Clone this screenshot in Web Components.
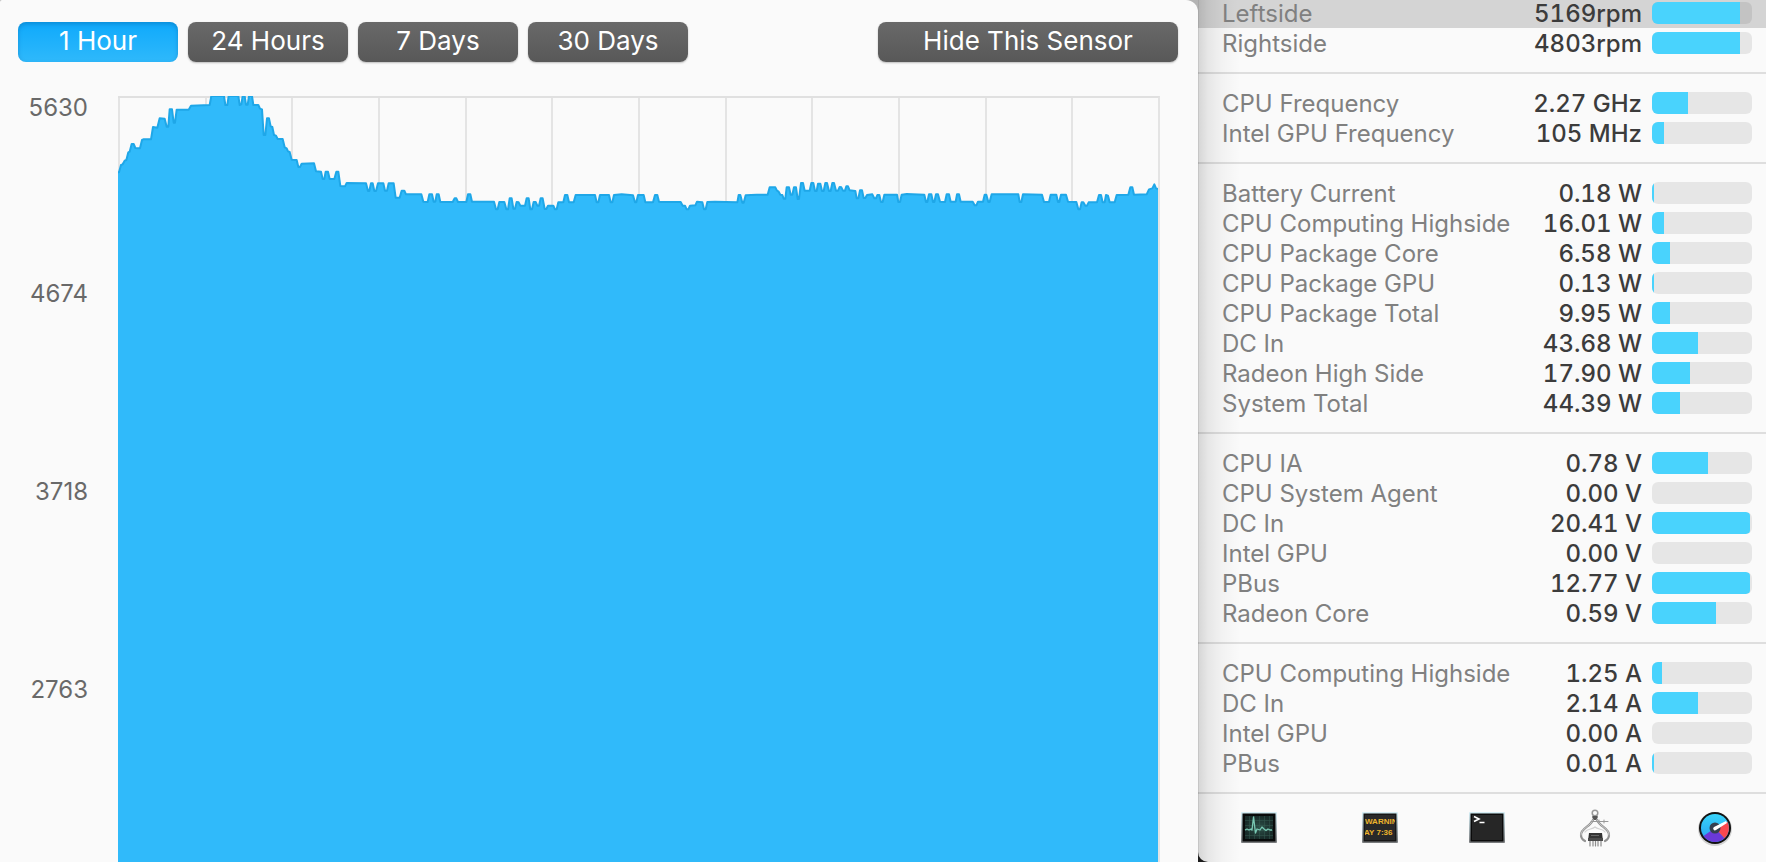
<!DOCTYPE html>
<html lang="en">
<head>
<meta charset="utf-8">
<title>Sensors</title>
<style>
    body {
        margin: 0;
        min-height: 100vh;
        display: grid;
        background: linear-gradient(#b4b4b4 50%, #1c1c1c 50%);
        font-family: Inter, "Liberation Sans", sans-serif;
        font-size: 24px;
        line-height: 30px;
        color: #3c3c3c;
    }
</style>
</head>
<body>
<sensor-app>
    <history-panel slot="history">
        <range-button slot="ranges" active>1 Hour</range-button>
        <range-button slot="ranges">24 Hours</range-button>
        <range-button slot="ranges">7 Days</range-button>
        <range-button slot="ranges">30 Days</range-button>
        <range-button slot="action" wide>Hide This Sensor</range-button>
        <history-chart labels="5630,4674,3718,2763"></history-chart>
    </history-panel>
    <sensor-list slot="sensors">
        <sensor-group>
            <sensor-row label="Leftside" value="5169rpm" level="88" selected></sensor-row>
            <sensor-row label="Rightside" value="4803rpm" level="88"></sensor-row>
        </sensor-group>
        <sensor-group>
            <sensor-row label="CPU Frequency" value="2.27 GHz" level="36"></sensor-row>
            <sensor-row label="Intel GPU Frequency" value="105 MHz" level="12"></sensor-row>
        </sensor-group>
        <sensor-group>
            <sensor-row label="Battery Current" value="0.18 W" level="2"></sensor-row>
            <sensor-row label="CPU Computing Highside" value="16.01 W" level="12"></sensor-row>
            <sensor-row label="CPU Package Core" value="6.58 W" level="18"></sensor-row>
            <sensor-row label="CPU Package GPU" value="0.13 W" level="2"></sensor-row>
            <sensor-row label="CPU Package Total" value="9.95 W" level="18"></sensor-row>
            <sensor-row label="DC In" value="43.68 W" level="46"></sensor-row>
            <sensor-row label="Radeon High Side" value="17.90 W" level="38"></sensor-row>
            <sensor-row label="System Total" value="44.39 W" level="28"></sensor-row>
        </sensor-group>
        <sensor-group>
            <sensor-row label="CPU IA" value="0.78 V" level="56"></sensor-row>
            <sensor-row label="CPU System Agent" value="0.00 V" level="0"></sensor-row>
            <sensor-row label="DC In" value="20.41 V" level="98"></sensor-row>
            <sensor-row label="Intel GPU" value="0.00 V" level="0"></sensor-row>
            <sensor-row label="PBus" value="12.77 V" level="98"></sensor-row>
            <sensor-row label="Radeon Core" value="0.59 V" level="64"></sensor-row>
        </sensor-group>
        <sensor-group>
            <sensor-row label="CPU Computing Highside" value="1.25 A" level="10"></sensor-row>
            <sensor-row label="DC In" value="2.14 A" level="46"></sensor-row>
            <sensor-row label="Intel GPU" value="0.00 A" level="0"></sensor-row>
            <sensor-row label="PBus" value="0.01 A" level="2"></sensor-row>
        </sensor-group>
        <app-dock slot="dock"></app-dock>
    </sensor-list>
</sensor-app>

<script>
class SensorApp extends HTMLElement {
    constructor() {
        super();
        this.attachShadow({ mode: 'open' }).innerHTML = `
            <style>
                :host {
                    display: grid;
                    grid-template-columns: minmax(0, 1fr) 568px;
                    height: 100vh;
                    overflow: hidden;
                }
            </style>
            <slot name="history"></slot>
            <slot name="sensors"></slot>
        `;
    }
}

class HistoryPanel extends HTMLElement {
    constructor() {
        super();
        this.attachShadow({ mode: 'open' }).innerHTML = `
            <style>
                :host {
                    display: flex;
                    flex-direction: column;
                    gap: 34px;
                    box-sizing: border-box;
                    padding: 22px 20px 0 18px;
                    background: #fafafa;
                    border-radius: 2px 12px 0 0;
                    min-height: 0;
                }
                .toolbar {
                    display: flex;
                    justify-content: space-between;
                }
                .ranges {
                    display: flex;
                    gap: 10px;
                }
            </style>
            <div class="toolbar">
                <div class="ranges"><slot name="ranges"></slot></div>
                <slot name="action"></slot>
            </div>
            <slot></slot>
        `;
    }
}

class RangeButton extends HTMLElement {
    constructor() {
        super();
        this.attachShadow({ mode: 'open' }).innerHTML = `
            <style>
                :host {
                    display: block;
                    width: 160px;
                }
                :host([wide]) {
                    width: 300px;
                }
                button {
                    width: 100%;
                    height: 40px;
                    padding: 0 0 2px;
                    border: 0;
                    border-radius: 8px;
                    background: linear-gradient(#696969, #585858);
                    box-shadow: 0 1px 2px rgba(0, 0, 0, 0.25);
                    color: #fff;
                    font: inherit;
                    font-size: 26px;
                }
                :host([active]) button {
                    background: linear-gradient(#0fa9fb, #2fb9fb);
                    box-shadow: inset 0 2px 4px rgba(0, 70, 130, 0.3);
                }
            </style>
            <button type="button"><slot></slot></button>
        `;
    }
}

// One hour of fan speed. Each chunk is [x offset, "x,y x,y ..."], 3 units per pixel.
const HISTORY = [
    [-24, `24,262 27,262 33,240 38,238 44,227 49,225 55,202 59,200 65,177 71,177 76,189 90,190 96,165 100,163
        123,163 129,126 142,128 149,100 164,101 170,125 175,125 179,73 186,73 191,113 195,113 200,74 236,74
        243,62 299,60 304,33 342,33 346,60 352,60 356,33 385,33 389,60 394,58 398,33 404,33 408,59 413,59
        417,33 426,33 430,60 445,60 450,71 456,73 461,150 466,150 471,100 477,100 482,124 487,126 492,150
        498,152 503,162 518,162 524,187 530,190 534,199 539,201 545,224 560,225 565,246 570,246 575,236
        612,235 618,259 633,260 638,282 643,282 647,260 654,260 659,282 673,282 679,260 685,260 691,303
        705,304 710,294 768,295 774,318 778,318 783,295 788,295 793,318 798,318 804,295 820,295 825,317
        831,317 836,295 851,295 857,338 869,338`],
    [846, `5,317 13,317 18,328 64,328 70,350 83,351 88,328 96,328 101,350 106,350 110,328 116,328 121,351
        158,351 164,340 169,340 174,351 199,351 204,328 211,328 216,350 282,350 288,373 293,373 298,351
        313,351 319,373 324,373 329,340 335,340 340,371 345,371 350,351 356,352 361,362 375,362 380,340
        386,340 391,373 396,373 401,351 407,351 412,362 417,362 422,340 428,340 434,372 439,372 444,362
        460,362 465,373 470,373 475,352 490,352 495,330 502,330 507,352 521,352 527,330 585,330 590,352
        595,352 600,330 627,330 632,352 637,352 642,330 665,328 699,331 705,352 709,352 714,330 731,330
        736,352 759,352 765,330 772,330 777,350`],
    [1626, `3,351 62,351 68,362 75,362 80,373 85,373 90,362 106,361 111,350 127,352 132,373 137,373 142,351
        165,350 232,352 236,330 241,330 247,353 251,353 257,331 290,329 323,329 329,307 346,307 351,317
        356,320 361,329 367,330 371,341 376,341 380,307 387,307 392,329 397,329 402,307 408,307 413,342
        417,342 423,294 429,294 434,317 449,317 454,294 460,294 465,318 470,318 474,296 481,296 486,318
        491,318 496,294 501,294 507,318 512,318 517,294 522,294 528,317 534,317 539,306 544,307 549,317
        555,317 559,304 564,304 569,316 586,318 590,340 595,340 600,316 606,316 611,339 616,339 621,330
        637,328 643,340 648,340 652,330 658,330 663,351 668,351 673,329 711,329 715,351 720,351 725,329
        740,327`],
    [2406, `13,329 18,351 22,351 27,328 34,328 39,351 43,351 48,328 54,328 60,350 75,351 80,328 87,328
        92,350 107,350 111,328 117,328 122,350 158,350 164,361 169,361 174,350 189,350 194,329 199,329
        205,351 209,351 215,328 295,328 299,351 304,351 309,328 366,329 372,351 387,351 392,329 409,329
        414,351 418,351 423,329 438,329 444,350 469,351 475,373 480,373 485,352 490,352 496,362 501,362
        506,352 531,352 537,330 543,330 548,352 554,352 558,330 564,332 569,352 584,352 590,330 625,329
        631,307 637,307 642,329 680,328 687,313 697,310 703,298 708,310 714,312`],
];

class HistoryChart extends HTMLElement {
    constructor() {
        super();
        const points = HISTORY.flatMap(([offset, chunk]) =>
            chunk.trim().split(/\s+/).map(pair => {
                const [x, y] = pair.split(',').map(Number);
                return `${x + offset},${y - 33}`;
            })
        ).join(' ');
        this.attachShadow({ mode: 'open' }).innerHTML = `
            <style>
                :host {
                    flex: 1;
                    display: grid;
                    grid-template-columns: 70px minmax(0, 1fr);
                    column-gap: 30px;
                    padding-right: 18px;
                    min-height: 0;
                }
                .labels {
                    display: flex;
                    flex-direction: column;
                    color: #696969;
                    text-align: right;
                }
                .labels span {
                    height: 198px;
                    line-height: 198px;
                    flex: none;
                }
                /* the top label hangs below its line, the others sit centred on theirs */
                .labels span:first-child {
                    height: 99px;
                    line-height: 24px;
                }
                .plot {
                    display: grid;
                }
                .grid, svg {
                    grid-area: 1 / 1;
                }
                .grid {
                    display: flex;
                    border-top: 2px solid #e0e0e0;
                    border-right: 2px solid #e4e4e4;
                }
                .grid i {
                    flex: 1;
                    border-left: 2px solid #e4e4e4;
                }
                svg {
                    width: calc(100% - 2px);
                    height: 100%;
                }
                polygon {
                    fill: #30bafa;
                }
                polyline {
                    fill: none;
                    stroke: #1fa7e8;
                    stroke-width: 2;
                    stroke-linejoin: round;
                    vector-effect: non-scaling-stroke;
                }
            </style>
            <div class="labels"></div>
            <div class="plot">
                <div class="grid">${'<i></i>'.repeat(12)}</div>
                <svg viewBox="0 0 3120 2298" preserveAspectRatio="none" aria-hidden="true">
                    <polygon points="0,2298 ${points} 3120,2298"></polygon>
                    <polyline points="${points}"></polyline>
                </svg>
            </div>
        `;
    }

    connectedCallback() {
        this.shadowRoot.querySelector('.labels').innerHTML =
            this.getAttribute('labels').split(',').map(t => `<span>${t}</span>`).join('');
    }
}

class SensorList extends HTMLElement {
    constructor() {
        super();
        this.attachShadow({ mode: 'open' }).innerHTML = `
            <style>
                :host {
                    display: flex;
                    flex-direction: column;
                    background:
                        linear-gradient(90deg, rgba(0, 0, 0, 0.28), rgba(0, 0, 0, 0.14) 1px, rgba(0, 0, 0, 0.08) 10px,
                            rgba(0, 0, 0, 0.03) 24px, transparent 42px),
                        #fafafa;
                    border-bottom-left-radius: 10px;
                }
                /* scrolled so that the first row is cut by the window */
                .groups {
                    margin-top: -16px;
                }
                ::slotted(app-dock) {
                    flex: 1;
                }
            </style>
            <div class="groups"><slot></slot></div>
            <slot name="dock"></slot>
        `;
    }
}

class SensorGroup extends HTMLElement {
    constructor() {
        super();
        this.attachShadow({ mode: 'open' }).innerHTML = `
            <style>
                :host {
                    display: block;
                    padding: 14px 0;
                    border-bottom: 2px solid rgba(0, 0, 0, 0.11);
                }
            </style>
            <slot></slot>
        `;
    }
}

class SensorRow extends HTMLElement {
    constructor() {
        super();
        this.attachShadow({ mode: 'open' }).innerHTML = `
            <style>
                :host {
                    display: grid;
                    grid-template-columns: minmax(0, 1fr) auto 100px;
                    align-items: center;
                    column-gap: 10px;
                    height: 30px;
                    line-height: 24px;
                    padding: 0 14px 0 24px;
                }
                :host([selected]) {
                    background: rgba(0, 0, 0, 0.15);
                }
                .label, .value {
                    padding-top: 2px;
                    white-space: nowrap;
                }
                .label {
                    color: #808080;
                }
                .value {
                    color: #3c3c3c;
                    font-weight: 500;
                    font-variant-numeric: tabular-nums;
                }
                .track {
                    height: 22px;
                    border-radius: 6px;
                    background: rgba(0, 0, 0, 0.08);
                    overflow: hidden;
                }
                .fill {
                    height: 100%;
                    background: #49d3fd;
                }
                .fill.full {
                    border-radius: 0 4px 4px 0;
                }
            </style>
            <span class="label" id="label"></span>
            <span class="value"></span>
            <div class="track" role="meter" aria-labelledby="label" aria-valuemin="0" aria-valuemax="100">
                <div class="fill"></div>
            </div>
        `;
    }

    connectedCallback() {
        const root = this.shadowRoot;
        const level = Number(this.getAttribute('level'));
        root.querySelector('.label').textContent = this.getAttribute('label');
        root.querySelector('.value').textContent = this.getAttribute('value');
        root.querySelector('.track').setAttribute('aria-valuenow', level);
        root.querySelector('.fill').style.width = level + '%';
        root.querySelector('.fill').classList.toggle('full', level > 95);
    }
}

class AppDock extends HTMLElement {
    constructor() {
        super();
        this.attachShadow({ mode: 'open' }).innerHTML = `
            <style>
                :host {
                    display: flex;
                    justify-content: space-between;
                    align-items: center;
                    padding: 0 20px 0 30px;
                }
                button {
                    display: grid;
                    place-items: center;
                    width: 36px;
                    height: 40px;
                    padding: 0;
                    border: 0;
                    background: none;
                }
                button:first-of-type, button:last-of-type {
                    width: 62px;
                }
                button > svg {
                    width: 36px;
                    height: 40px;
                }
            </style>
            <button type="button" aria-label="Activity Monitor">
                <svg viewBox="0 0 36 40">
                    <defs>
                        <linearGradient id="frame" x2="0" y2="1">
                            <stop offset="0" stop-color="#d5eef5"></stop>
                            <stop offset="1" stop-color="#77797b"></stop>
                        </linearGradient>
                        <radialGradient id="scope">
                            <stop offset="0" stop-color="#2d5149"></stop>
                            <stop offset="1" stop-color="#182b29"></stop>
                        </radialGradient>
                    </defs>
                    <rect y="4" width="36" height="31" rx="1" fill="url(#frame)"></rect>
                    <rect x="1.5" y="5.5" width="33" height="28" fill="#080a0a"></rect>
                    <rect x="4" y="8" width="28" height="23" fill="url(#scope)"></rect>
                    <path d="M8.5 8v23M13.5 8v23M18.5 8v23M23.5 8v23M28.5 8v23M4 12.5h28M4 17.5h28M4 22.5h28M4 27.5h28"
                        stroke="#3d665a" stroke-width=".6" opacity=".7"></path>
                    <path d="M4 22l2-1 2 1 2-1 1 1 1.5-13 2 16 1.5-4 3 1 2-3 2 2 2 1.500 2-1.500 2 1h2"
                        fill="none" stroke="#79c9b4" stroke-width="1.3" stroke-linejoin="round"></path>
                </svg>
            </button>
            <button type="button" aria-label="Console">
                <svg viewBox="0 0 36 40">
                    <rect y="4" width="36" height="31" rx="1" fill="url(#frame)"></rect>
                    <rect x="1.5" y="5.5" width="33" height="28" fill="#161616"></rect>
                    <svg x="3" y="7" width="30" height="25" viewBox="3 7 30 25">
                        <rect x="3" y="7" width="30" height="25" fill="#292929"></rect>
                        <g fill="#edb42c" font-family="Liberation Sans, sans-serif" font-weight="700" font-size="8">
                            <text x="3" y="16">WARNIN</text>
                            <text x="2" y="27">AY 7:36</text>
                        </g>
                    </svg>
                </svg>
            </button>
            <button type="button" aria-label="Terminal">
                <svg viewBox="0 0 36 40">
                    <rect y="4" width="36" height="31" rx="1" fill="url(#frame)"></rect>
                    <rect x="1.5" y="5.5" width="33" height="28" fill="#0b0b0b"></rect>
                    <rect x="3" y="7" width="30" height="25" fill="#262626"></rect>
                    <path d="M5 8.5l5 2.500-5 2.500M10.5 14.5h5" fill="none" stroke="#fff" stroke-width="1.6"></path>
                </svg>
            </button>
            <button type="button" aria-label="System Information">
                <svg viewBox="0 0 36 40">
                    <g fill="none" stroke-linecap="round">
                        <circle cx="18" cy="5" r="2.8" stroke="#999" stroke-width="1.5"></circle>
                        <path d="M16 9h4M16.5 11h3" stroke="#555" stroke-width="1.8"></path>
                        <path d="M16 12c-3 7-12 8-12 15 0 3 2 5 4 6M20 12c3 7 12 8 12 15 0 3-2 5-4 6" stroke="#919191" stroke-width="2.2"></path>
                        <path d="M16 12c-3 7-12 8-12 15M20 12c3 7 12 8 12 15" stroke="#dedede" stroke-width=".7"></path>
                        <path d="M14 13.5h17M22 12v3M27 12v3" stroke="#999" stroke-width="1"></path>
                        <path d="M8 24c3-4 7-2 10-5 3 3 7 1 10 5" stroke="#d2d2d2" stroke-width="1.2"></path>
                        <path d="M13 33v5M16 33v5M18.5 33v5M21 33v5M24 33v5" stroke="#8d8d8d" stroke-width="1.2"></path>
                    </g>
                    <path d="M12 25h13l1 8H11z" fill="#333"></path>
                    <path d="M11 30h15v3H11z" fill="#4a4a4a"></path>
                    <path d="M14 27.5h8" stroke="#666" stroke-width="1"></path>
                </svg>
            </button>
            <button type="button" aria-label="iStat Menus">
                <svg viewBox="0 0 36 40">
                    <defs>
                        <linearGradient id="blue" x2="0" y2="1">
                            <stop offset="0" stop-color="#39d4fa"></stop>
                            <stop offset="1" stop-color="#249ff0"></stop>
                        </linearGradient>
                    </defs>
                    <circle cx="18" cy="21" r="17" fill="#d3d3d3"></circle>
                    <circle cx="18" cy="20" r="16" fill="#111"></circle>
                    <circle cx="18" cy="20" r="14" fill="url(#blue)"></circle>
                    <path d="M18 20L6.500 28A14 14 0 0 0 27.500 30.300Z" fill="#6b39d8"></path>
                    <path d="M18 20L30.500 13.700A14 14 0 0 1 27.500 30.300Z" fill="#f9484f"></path>
                    <circle cx="18" cy="20" r="5.5" fill="#344050"></circle>
                    <path d="M17 19L29 13l1 2-11 7a1.500 1.500 0 0 1-2-3z" fill="#fff"></path>
                </svg>
            </button>
        `;
    }
}

customElements.define('sensor-app', SensorApp);
customElements.define('history-panel', HistoryPanel);
customElements.define('range-button', RangeButton);
customElements.define('history-chart', HistoryChart);
customElements.define('sensor-list', SensorList);
customElements.define('sensor-group', SensorGroup);
customElements.define('sensor-row', SensorRow);
customElements.define('app-dock', AppDock);
</script>
</body>
</html>
